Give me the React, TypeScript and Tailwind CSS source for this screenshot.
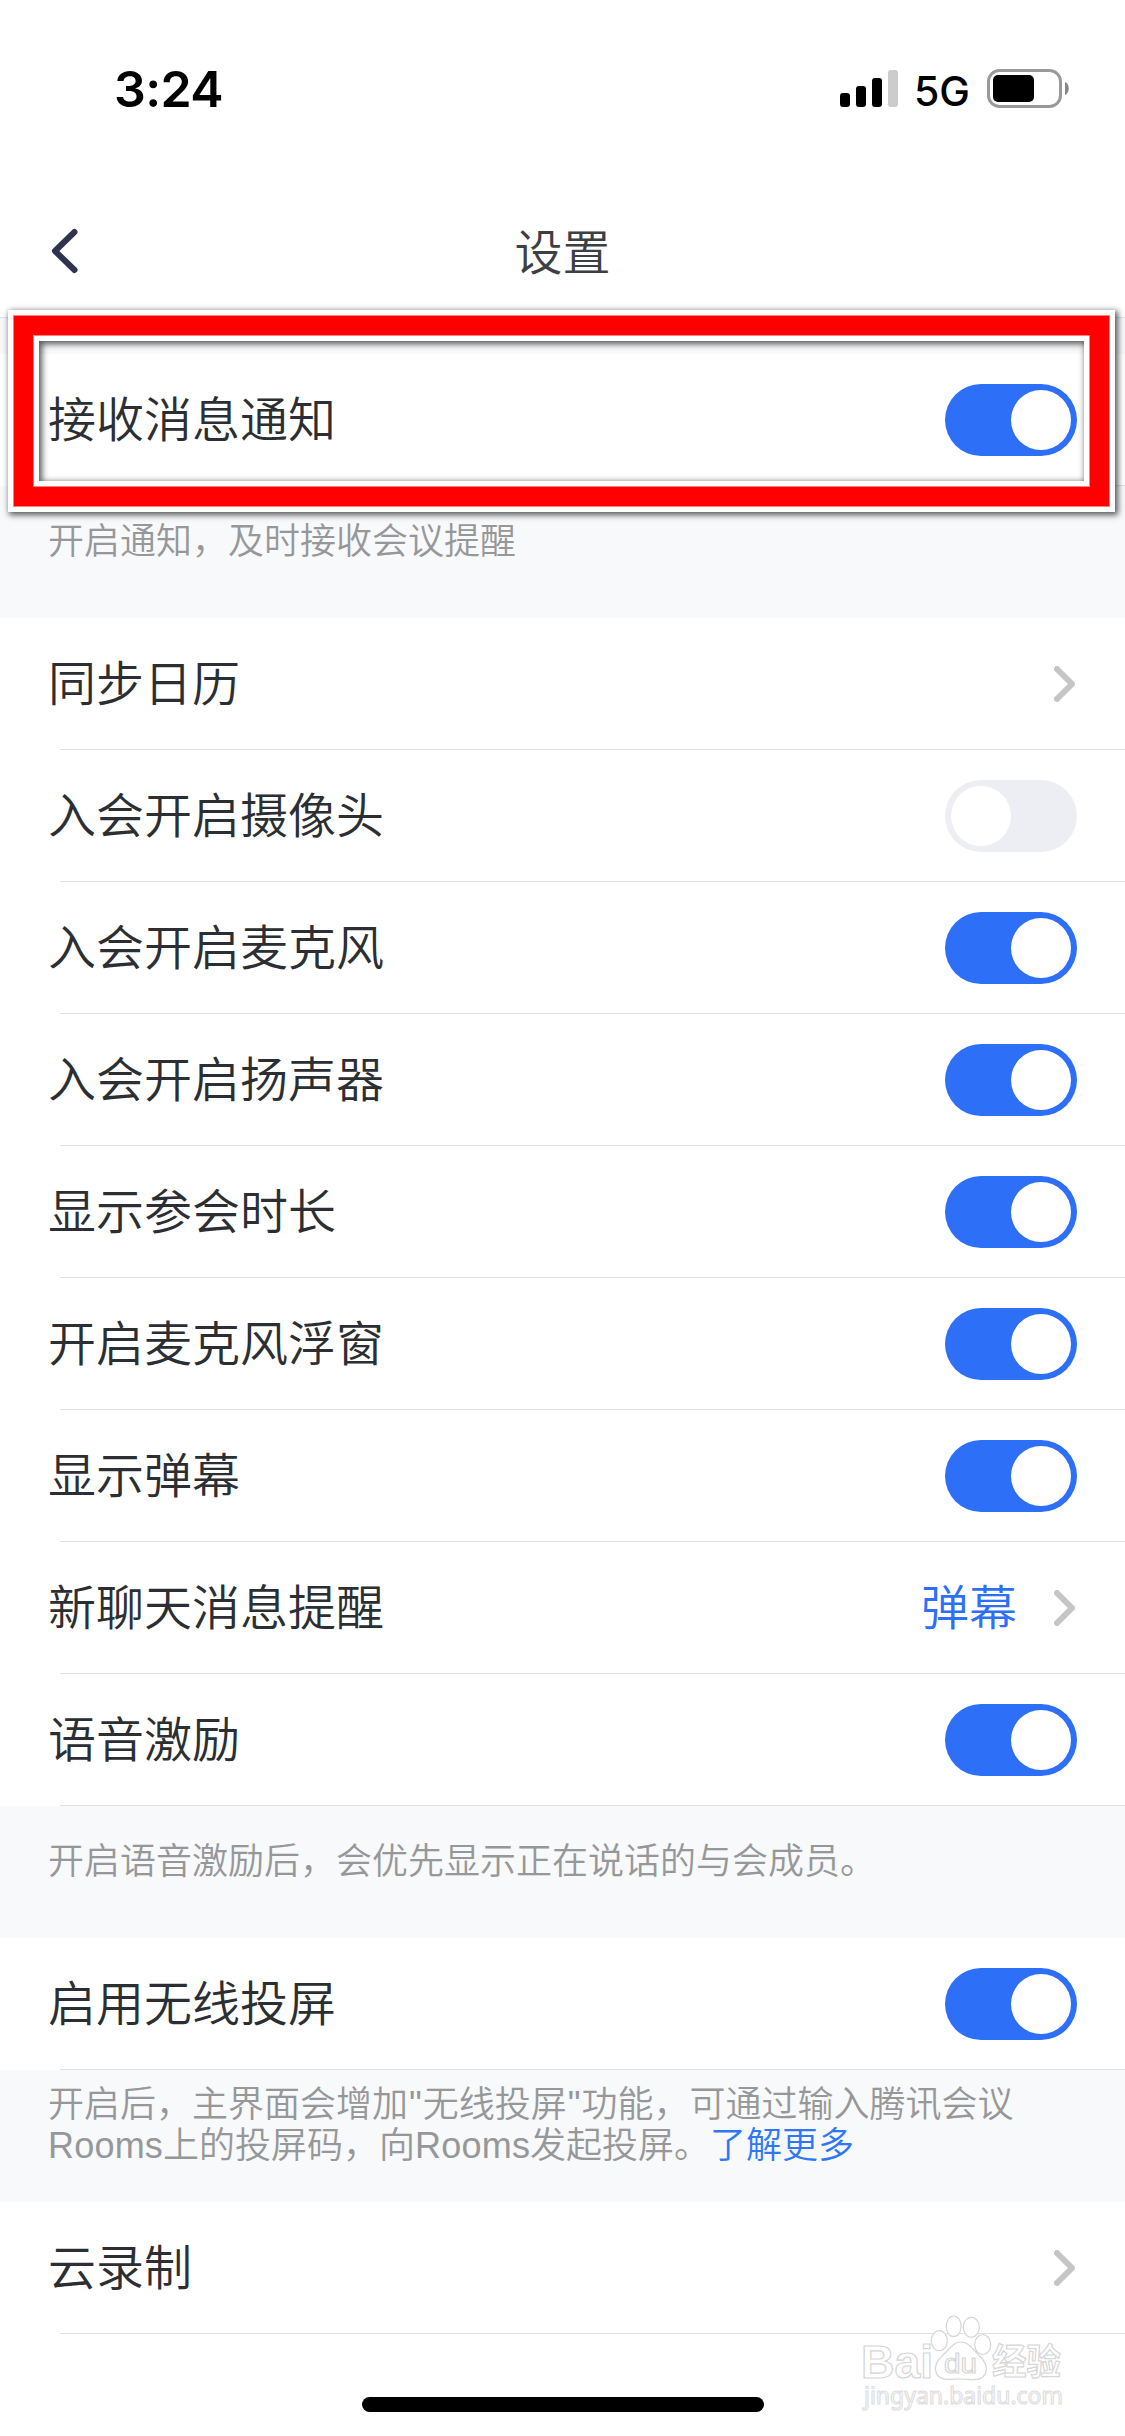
type SettingItem = {
  label: string
  type: "switch" | "link"
  on?: boolean
  value?: string
}

const meetingItems: SettingItem[] = [
  { label: "同步日历", type: "link" },
  { label: "入会开启摄像头", type: "switch", on: false },
  { label: "入会开启麦克风", type: "switch", on: true },
  { label: "入会开启扬声器", type: "switch", on: true },
  { label: "显示参会时长", type: "switch", on: true },
  { label: "开启麦克风浮窗", type: "switch", on: true },
  { label: "显示弹幕", type: "switch", on: true },
  { label: "新聊天消息提醒", type: "link", value: "弹幕" },
  { label: "语音激励", type: "switch", on: true },
]

function StatusBar() {
  return (
    <div className="flex h-[178px] items-start justify-between pl-[114px] pr-[56px] pt-[59px] text-black">
      <span className="font-['Inter'] text-[50px] leading-[60px] font-semibold tracking-[-0.6px]">3:24</span>
      <div className="flex h-[60px] items-center">
        <svg width="58" height="38" viewBox="0 0 58 38">
          <rect x="0" y="23" width="10" height="14" rx="3" />
          <rect x="16" y="16" width="10" height="21" rx="3" />
          <rect x="32" y="8" width="10" height="29" rx="3" />
          <rect x="48" y="0" width="10" height="37" rx="3" fill="#cccccc" />
        </svg>
        <span className="ml-[16px] mt-[3px] font-['Inter'] text-[41px] leading-[60px] font-medium">5G</span>
        <svg className="mb-[2px] ml-[17px]" width="82" height="39" viewBox="0 0 82 39">
          <rect x="1.5" y="1.5" width="72" height="36" rx="11" fill="none" stroke="#999999" strokeWidth="3" />
          <rect x="6" y="6" width="41" height="27" rx="5" />
          <path d="M78 13 C83 15 83 24 78 26 Z" fill="#888888" />
        </svg>
      </div>
    </div>
  )
}

function Header() {
  return (
    <div className="grid h-[140px] grid-cols-3 items-center border-b border-[#e2e3e6] bg-white px-[48px] pb-[1px]">
      <svg className="mt-[7px]" width="32" height="48" viewBox="0 0 32 48">
        <path d="M26.5 5 L7 24 L26.5 43" fill="none" stroke="#2f3350" strokeWidth="6" strokeLinecap="round" strokeLinejoin="round" />
      </svg>
      <h1 className="mt-[13px] text-center text-[48px] leading-[60px] font-[350] text-[#3c4043]">设置</h1>
    </div>
  )
}

function Switch({ on }: { on?: boolean }) {
  return (
    <span className={`flex h-[72px] w-[132px] rounded-full p-[6px] ${on ? "justify-end bg-[#2e6ff7]" : "justify-start bg-[#edeef3]"}`}>
      <span className="size-[60px] rounded-full bg-white" />
    </span>
  )
}

function Chevron() {
  return (
    <svg className="mr-[2px]" width="21" height="36" viewBox="0 0 21 36">
      <path d="M3 3 L18 18 L3 33" fill="none" stroke="#c5c5c7" strokeWidth="6" strokeLinecap="round" strokeLinejoin="round" />
    </svg>
  )
}

function Row({ item }: { item: SettingItem }) {
  return (
    <div className="bg-white">
      <div className="flex h-[131px] items-center justify-between px-[48px]">
        <span className="pt-[3px] text-[48px] leading-[60px] font-[350] text-[#2b2f33]">{item.label}</span>
        {item.type === "switch" ? (
          <Switch on={item.on} />
        ) : (
          <span className="flex items-center gap-[37px] text-[48px] leading-[60px] font-[350] text-[#2e6ff7]">
            <span className="pt-[3px]">{item.value}</span>
            <Chevron />
          </span>
        )}
      </div>
      <div className="ml-[60px] h-px bg-[#e0e1e3]" />
    </div>
  )
}

function Note({ children }: { children: React.ReactNode }) {
  return (
    <div className="flex h-[132px] items-center px-[48px] pb-[22px] text-[36px] leading-[41px] font-[350] text-[#969799]">
      <p>{children}</p>
    </div>
  )
}

function Watermark() {
  return (
    <svg
      className="absolute bottom-[14px] left-[856px]"
      width="220"
      height="110"
      viewBox="0 0 220 110"
      fill="#ffffff"
      stroke="#d6d6d6"
      strokeWidth="1.2"
    >
      <text x="5" y="66" fontSize="46" fontWeight="700" textLength="72" lengthAdjust="spacingAndGlyphs" fontFamily="Liberation Sans, sans-serif">Bai</text>
      <ellipse cx="83.3" cy="28.7" rx="8" ry="10" />
      <ellipse cx="97.7" cy="14.3" rx="7.5" ry="10.3" />
      <ellipse cx="115.3" cy="15.3" rx="8" ry="10" />
      <ellipse cx="126.7" cy="32.5" rx="8" ry="10" />
      <path d="M105 30 C97 30 94 37 88 42 C81 48 78 54 80 60 C83 70 95 67 105 67 C115 67 126 71 130 60 C132 54 128 48 122 42 C116 37 113 30 105 30 Z" />
      <text x="88" y="61" fontSize="28" textLength="33" lengthAdjust="spacingAndGlyphs" fontFamily="Liberation Sans, sans-serif">du</text>
      <text x="136" y="63" fontSize="36" fontWeight="700" textLength="69" lengthAdjust="spacingAndGlyphs" fontFamily="Noto Sans CJK SC, sans-serif">经验</text>
      <text x="8" y="92" fontSize="24" textLength="199" lengthAdjust="spacingAndGlyphs" fontFamily="Noto Sans, sans-serif" stroke="#dedede">jingyan.baidu.com</text>
    </svg>
  )
}

export default function App() {
  return (
    <div className="relative h-[2436px] w-[1125px] overflow-hidden bg-white font-['Liberation_Sans','Noto_Sans_CJK_SC',sans-serif]">
      <StatusBar />
      <Header />
      <div className="bg-[#f8f9fb] pt-[36px]">
        <Row item={{ label: "接收消息通知", type: "switch", on: true }} />
        <Note>开启通知，及时接收会议提醒</Note>
        {meetingItems.map((item) => (
          <Row key={item.label} item={item} />
        ))}
        <Note>开启语音激励后，会优先显示正在说话的与会成员。</Note>
        <Row item={{ label: "启用无线投屏", type: "switch", on: true }} />
        <Note>
          开启后，主界面会增加<span className="px-px">"</span>无线投屏<span className="px-px">"</span>功能，可通过输入腾讯会议
          <br />
          <span className="tracking-[0.2px]">Rooms</span>上的投屏码，向<span className="tracking-[0.2px]">Rooms</span>发起投屏。
          <a className="text-[#2e78f7]">了解更多</a>
        </Note>
        <Row item={{ label: "云录制", type: "link" }} />
      </div>

      {/* highlight frame around the notification row */}
      <div className="absolute left-[8px] top-[310px] h-[202px] w-[1107px] shadow-[inset_0_0_0_5px_#fff,inset_0_0_0_6px_#ff8080,inset_0_0_0_25px_#f00,inset_0_0_0_26px_#ff8080,inset_0_0_0_31px_#fff,inset_2px_2px_6px_32px_rgba(0,0,0,0.65),2px_2px_6px_1px_rgba(0,0,0,0.65)]" />

      <Watermark />
      <div className="absolute bottom-[24px] left-[362px] h-[15px] w-[402px] rounded-full bg-black" />
    </div>
  )
}
